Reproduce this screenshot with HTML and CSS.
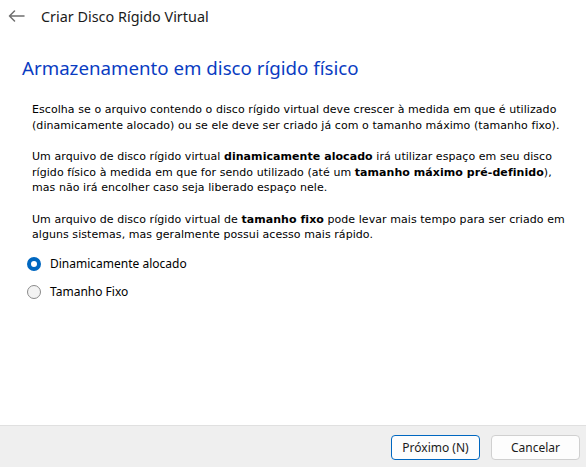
FILE: index.html
```html
<!DOCTYPE html>
<html lang="pt">
<head>
<meta charset="utf-8">
<title>Criar Disco Rígido Virtual</title>
<link rel="stylesheet" href="styles.css">
</head>
<body>
<div class="window">
  <header class="titlebar">
    <svg class="back" width="17" height="12" viewBox="0 0 17 12" aria-hidden="true">
      <path d="M16 6H1.5M6.5 1L1.5 6l5 5" fill="none" stroke="#6f6f6f" stroke-width="1.5" stroke-linecap="round" stroke-linejoin="round"/>
    </svg>
    <span class="title">Criar Disco Rígido Virtual</span>
  </header>
  <main class="content">
    <h1 class="heading">Armazenamento em disco rígido físico</h1>
    <div class="text">
      <p>Escolha se o arquivo contendo o disco rígido virtual deve crescer à medida em que é utilizado (dinamicamente alocado) ou se ele deve ser criado já com o tamanho máximo (tamanho fixo).</p>
      <p>Um arquivo de disco rígido virtual <b>dinamicamente alocado</b> irá utilizar espaço em seu disco rígido físico à medida em que for sendo utilizado (até um <b>tamanho máximo pré-definido</b>), mas não irá encolher caso seja liberado espaço nele.</p>
      <p>Um arquivo de disco rígido virtual de <b>tamanho fixo</b> pode levar mais tempo para ser criado em alguns sistemas, mas geralmente possui acesso mais rápido.</p>
    </div>
    <div class="options">
      <label class="option"><span class="radio checked"></span><span class="label">Dinamicamente alocado</span></label>
      <label class="option"><span class="radio"></span><span class="label">Tamanho Fixo</span></label>
    </div>
  </main>
  <footer class="footer">
    <button class="btn primary">Próximo (N)</button>
    <button class="btn">Cancelar</button>
  </footer>
</div>
</body>
</html>
```
FILE: styles.css
```css
html, body {
  margin: 0;
  padding: 0;
  background: #ffffff;
}
.window {
  width: 586px;
  height: 467px;
  display: flex;
  flex-direction: column;
  background: #ffffff;
}
.titlebar {
  height: 32px;
  display: flex;
  align-items: center;
  padding-left: 8px;
  box-sizing: border-box;
}
.back {
  display: block;
  margin-right: 16px;
}
.title {
  font-family: "Noto Sans", sans-serif;
  font-size: 14.4px;
  color: #1b1b1b;
}
.content {
  flex: 1;
  display: flex;
  flex-direction: column;
}
.heading {
  margin: 22px 0 0 22px;
  font-family: "Noto Sans", sans-serif;
  font-weight: normal;
  font-size: 18.7px;
  line-height: 28px;
  color: #0a3cc2;
}
.text {
  margin: 20px 16px 0 32px;
  font-family: "DejaVu Sans", sans-serif;
  font-size: 11px;
  letter-spacing: 0.06px;
  line-height: 15.5px;
  color: #000000;
}
.text p {
  margin: 0 0 16px 0;
}
.text b {
  font-weight: bold;
}
.options {
  margin: -4px 0 0 27px;
  display: flex;
  flex-direction: column;
  gap: 10px;
}
.option {
  display: flex;
  align-items: center;
  height: 18px;
}
.radio {
  width: 12px;
  height: 12px;
  border-radius: 50%;
  border: 1px solid #8a8a8a;
  background: #f3f3f3;
  margin-right: 9px;
  flex: none;
}
.radio.checked {
  width: 6px;
  height: 6px;
  border: 4px solid #0067c0;
  background: #ffffff;
}
.label {
  font-family: "Noto Sans", sans-serif;
  font-size: 12px;
  color: #000000;
}
.footer {
  height: 42px;
  box-sizing: border-box;
  border-top: 1px solid #e0e0e0;
  background: #efefef;
  display: flex;
  justify-content: flex-end;
  align-items: flex-start;
  padding: 9px 6px 0 0;
  gap: 11px;
}
.btn {
  width: 89px;
  height: 25px;
  box-sizing: border-box;
  border: 1px solid #d0d0d0;
  border-radius: 4px;
  background: #fdfdfd;
  font-family: "Noto Sans", sans-serif;
  font-size: 12px;
  color: #1b1b1b;
  padding: 0;
}
.btn.primary {
  border-color: #0067c0;
}
```
